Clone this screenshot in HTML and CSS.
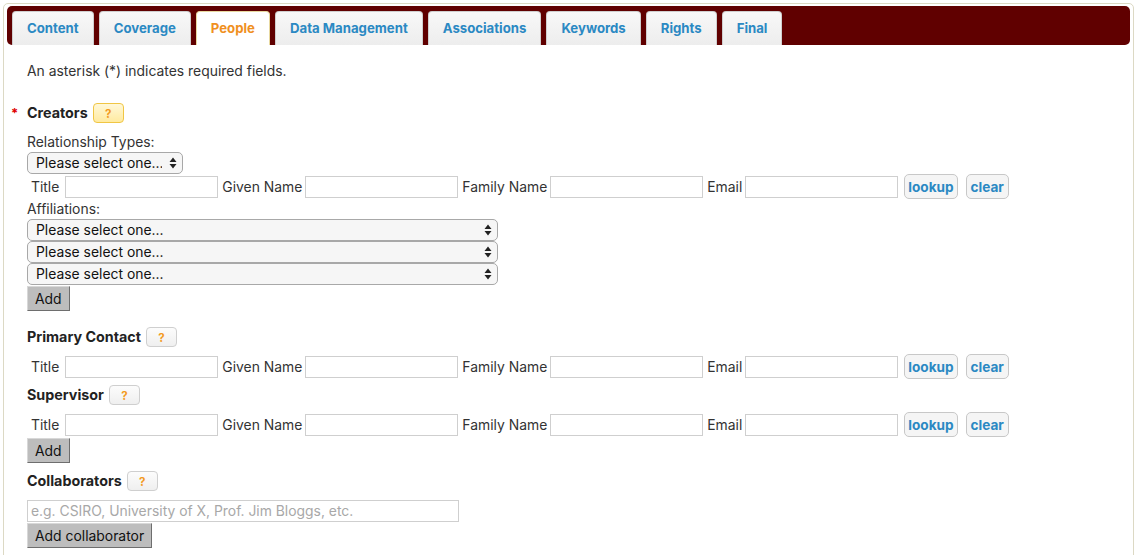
FILE: index.html
```html
<!DOCTYPE html>
<html lang="en">
<head>
<meta charset="utf-8">
<title>People</title>
<link rel="stylesheet" href="styles.css">
</head>
<body>
<div class="frame">
  <nav class="tabbar">
    <a class="tab">Content</a>
    <a class="tab">Coverage</a>
    <a class="tab active">People</a>
    <a class="tab">Data Management</a>
    <a class="tab">Associations</a>
    <a class="tab">Keywords</a>
    <a class="tab">Rights</a>
    <a class="tab">Final</a>
  </nav>
  <div class="content">
    <p class="note">An asterisk (*) indicates required fields.</p>

    <h3 class="heading first"><span class="req">*</span>Creators <span class="help hot">?</span></h3>
    <div class="lbl top">Relationship Types:</div>
    <select class="sel short"><option>Please select one...</option></select>
    <div class="row">
      <label class="fl first">Title</label><input class="txt" type="text">
      <label class="fl">Given Name</label><input class="txt" type="text">
      <label class="fl">Family Name</label><input class="txt" type="text">
      <label class="fl">Email</label><input class="txt" type="text">
      <button class="lk">lookup</button><button class="lk">clear</button>
    </div>
    <div class="lbl">Affiliations:</div>
    <select class="sel long"><option>Please select one...</option></select>
    <select class="sel long"><option>Please select one...</option></select>
    <select class="sel long"><option>Please select one...</option></select>
    <button class="gbtn">Add</button>

    <h3 class="heading sec">Primary Contact <span class="help">?</span></h3>
    <div class="row spaced">
      <label class="fl first">Title</label><input class="txt" type="text">
      <label class="fl">Given Name</label><input class="txt" type="text">
      <label class="fl">Family Name</label><input class="txt" type="text">
      <label class="fl">Email</label><input class="txt" type="text">
      <button class="lk">lookup</button><button class="lk">clear</button>
    </div>

    <h3 class="heading tight">Supervisor <span class="help">?</span></h3>
    <div class="row spaced">
      <label class="fl first">Title</label><input class="txt" type="text">
      <label class="fl">Given Name</label><input class="txt" type="text">
      <label class="fl">Family Name</label><input class="txt" type="text">
      <label class="fl">Email</label><input class="txt" type="text">
      <button class="lk">lookup</button><button class="lk">clear</button>
    </div>
    <button class="gbtn">Add</button>

    <h3 class="heading tight2">Collaborators <span class="help">?</span></h3>
    <input class="txt wide" type="text" placeholder="e.g. CSIRO, University of X, Prof. Jim Bloggs, etc.">
    <button class="gbtn">Add collaborator</button>
  </div>
</div>
</body>
</html>
```

FILE: styles.css
```css
* { box-sizing: border-box; }
html, body { margin: 0; padding: 0; background: #fff; }
body {
  font-family: Inter, "Liberation Sans", sans-serif;
  font-size: 13.9px;
  color: #333;
  height: 555px;
  overflow: hidden;
}
.frame {
  margin: 3px 5px 0 3px;
  border: 1px solid #dcd9c4;
  border-radius: 5px;
  padding: 2px 3px 0 3px;
  height: 600px;
}
.tabbar {
  background: #600000;
  border-radius: 5px;
  height: 39px;
  padding: 5px 5px 0 5px;
  display: flex;
  align-items: flex-end;
  gap: 5px;
}
.tab {
  height: 34px;
  display: flex;
  align-items: center;
  padding: 0 14px 1px 14px;
  background: linear-gradient(#f8f8f8, #ededed);
  border: 1px solid #cfcfcf;
  border-bottom: none;
  border-radius: 4px 4px 0 0;
  font-size: 13.2px;
  font-weight: bold;
  color: #2b89c3;
  cursor: pointer;
}
.tab.active {
  background: #fff;
  color: #f0901e;
  border-color: #e8d9a0;
}
.content { padding: 0 0 0 20px; }
.note { margin: 16px 0 0 0; line-height: 20px; }
.heading {
  margin: 0;
  font-size: 14.3px;
  font-weight: bold;
  line-height: 20px;
  display: flex;
  align-items: center;
  gap: 5px;
  color: #222;
}
.heading.first { margin-top: 22px; margin-left: -16px; }
.heading.sec { margin-top: 16px; }
.heading.tight { margin-top: 6px; }
.heading.tight2 { margin-top: 8px; margin-bottom: 9px; }
.req { color: #e00000; width: 16px; margin-right: -5px; font-size: 13px; }
.help {
  display: inline-flex;
  align-items: center;
  justify-content: center;
  width: 31px;
  height: 20px;
  border: 1px solid #cfcfcf;
  border-radius: 4px;
  background: linear-gradient(#fcfcfc, #efefef);
  color: #f39a1e;
  font-size: 11.5px;
  font-weight: bold;
  padding-top: 2px;
}
.help.hot {
  background: linear-gradient(#fff8d8, #ffeaa0);
  border-color: #f0c644;
}
.lbl { line-height: 20px; }
.lbl.top { margin-top: 9px; }
.sel {
  display: block;
  -webkit-appearance: none;
  appearance: none;
  height: 22px;
  margin: 0;
  border: 1px solid #a8a8a8;
  border-radius: 5px;
  background-color: #f6f6f6;
  background-image: url("data:image/svg+xml;utf8,<svg xmlns='http://www.w3.org/2000/svg' width='8' height='12'><path d='M4 0.5 L7.5 5 L0.5 5 Z M4 11.5 L7.5 7 L0.5 7 Z' fill='%23222'/></svg>");
  background-repeat: no-repeat;
  background-position: right 5px center;
  font-family: Inter, "Liberation Sans", sans-serif;
  font-size: 13.9px;
  color: #111;
  padding: 0 20px 0 8px;
}
.sel.short { width: 156px; }
.sel.long { width: 471px; }
.row {
  display: flex;
  align-items: center;
  height: 25px;
}
.row.spaced { margin-top: 7px; }
.fl { margin: 0 3px 0 4px; line-height: 20px; }
.fl.first { margin-left: 4px; margin-right: 6px; }
.txt {
  width: 153px;
  height: 22px;
  margin: 0;
  border: 1px solid #cfcfcf;
  background: #fff;
  font-family: Inter, "Liberation Sans", sans-serif;
  font-size: 13.9px;
  padding: 0 3px;
}
.txt.wide { display: block; width: 432px; }
.txt::placeholder { color: #a8a8a8; }
.lk {
  height: 25px;
  margin: 0 0 0 6px;
  padding: 0 3px;
  border: 1px solid #c8c8c8;
  border-radius: 5px;
  background: #f5f5f5;
  color: #2b89c3;
  font-family: Inter, "Liberation Sans", sans-serif;
  font-size: 13.6px;
  font-weight: bold;
}
.lk + .lk { margin-left: 8px; padding: 0 4px; }
.gbtn {
  display: block;
  height: 25px;
  margin: 1px 0 0 0;
  padding: 0 7px;
  background: #bdbdbd;
  border: 1px solid;
  border-color: #d8d8d8 #6e6e6e #6e6e6e #d8d8d8;
  font-family: Inter, "Liberation Sans", sans-serif;
  font-size: 13.9px;
  color: #111;
}
```
